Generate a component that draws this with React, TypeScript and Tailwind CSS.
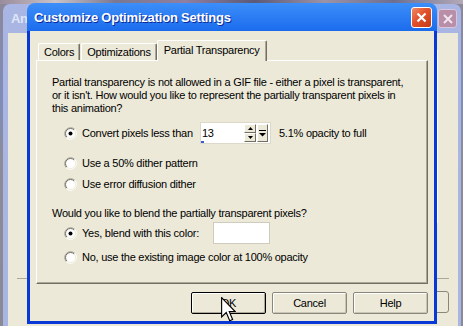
import React from 'react';

function Radio({ checked }: { checked?: boolean }) {
  return (
    <svg width="13" height="13" viewBox="0 0 13 13" className="shrink-0">
      <circle cx="6.5" cy="6.5" r="5.5" fill="#fff" />
      <path d="M2.26 10.74 A6 6 0 0 1 10.74 2.26" fill="none" stroke="#aca899" />
      <path d="M10.74 2.26 A6 6 0 0 1 2.26 10.74" fill="none" stroke="#fff" />
      <path d="M2.96 10.04 A5 5 0 0 1 10.04 2.96" fill="none" stroke="#716f64" />
      <path d="M10.04 2.96 A5 5 0 0 1 2.96 10.04" fill="none" stroke="#ece9d8" />
      {checked && <circle cx="6.5" cy="6.5" r="2" fill="#000" />}
    </svg>
  );
}

function RadioRow({ label, checked, children }: { label?: string; checked?: boolean; children?: React.ReactNode }) {
  return (
    <div className="flex items-center pl-[12px]">
      <Radio checked={checked} />
      <div className="ml-[5px] flex items-center">
        {label && <span className="whitespace-nowrap">{label}</span>}
        {children}
      </div>
    </div>
  );
}

function Btn({ label, focused }: { label: string; focused?: boolean }) {
  return (
    <div
      className={
        focused
          ? 'flex h-[22px] w-[75px] items-center justify-center rounded-[2px] border border-black bg-[#ece9d8] shadow-[inset_1px_1px_0_#fff,inset_-1px_-1px_0_#aca899]'
          : 'flex h-[22px] w-[75px] items-center justify-center rounded-[2px] border border-[#8a877a] bg-[#ece9d8] shadow-[inset_1px_1px_0_#fff,inset_-1px_-1px_0_#c8c5b7]'
      }
    >
      {label}
    </div>
  );
}

function Tab({ label, active }: { label: string; active?: boolean }) {
  return active ? (
    <div className="relative z-10 -mb-[1px] flex h-[21px] items-start rounded-t-[2px] border-l border-t border-r border-l-white border-t-white border-r-[#716f64] bg-[#ece9d8] px-[6px] pt-[3px] shadow-[inset_-1px_0_0_#aca899]">
      {label}
    </div>
  ) : (
    <div className="flex h-[17px] items-start rounded-t-[2px] border-l border-t border-r border-l-white border-t-white border-r-[#716f64] px-[5px] pt-[2px] shadow-[inset_-1px_0_0_#aca899]">
      {label}
    </div>
  );
}

function Spinner() {
  return (
    <div className="relative flex h-[22px] w-[71px] items-center border border-[#dcd9cb] bg-white pl-[1px] pr-[2px]">
      <span className="flex-1">13</span>
      <div className="flex h-[18px] w-[12px] flex-col">
        <div className="flex flex-1 items-center justify-center border border-l-white border-t-white border-r-[#716f64] border-b-[#716f64] bg-[#ece9d8]">
          <svg width="5" height="3" viewBox="0 0 5 3"><path d="M2.5 0 L5 3 L0 3 Z" fill="#000" /></svg>
        </div>
        <div className="flex flex-1 items-center justify-center border border-l-white border-t-white border-r-[#716f64] border-b-[#716f64] bg-[#ece9d8]">
          <svg width="5" height="3" viewBox="0 0 5 3"><path d="M0 0 L5 0 L2.5 3 Z" fill="#000" /></svg>
        </div>
      </div>
      <div className="ml-[1px] flex h-[18px] w-[11px] items-center justify-center border border-l-white border-t-white border-r-[#716f64] border-b-[#716f64] bg-[#ece9d8]">
        <svg width="7" height="7" viewBox="0 0 7 7">
          <rect x="0" y="0" width="7" height="1" fill="#000" />
          <path d="M0 3 L7 3 L3.5 6.5 Z" fill="#000" />
        </svg>
      </div>
      <span className="absolute bottom-0 left-0 h-[2px] w-[3px] bg-[#3b5fd0]" />
    </div>
  );
}

export default function App() {
  return (
    <div className="relative h-[326px] w-[463px] overflow-hidden bg-[linear-gradient(180deg,#8d8799_0%,#7f8db8_30%,#8c8c96_50%,#8a8a94_100%)] font-['Liberation_Sans',Arial,sans-serif] text-[11px] leading-[13px] tracking-[-0.25px] text-black">
      {/* desktop strip on top */}
      <div className="h-[4px] w-full bg-[linear-gradient(90deg,#9a8c9c,#c9c2c8_12%,#7a7892_25%,#8f7fa0_40%,#5b5a78_55%,#9c93a7_70%,#6d6f92_85%,#b3a9b8)]" />

      {/* window behind */}
      <div className="absolute left-[3px] top-[4px] flex h-[340px] w-[458px] flex-col rounded-t-[7px] bg-[#a9b6e4]">
        <div className="flex h-[29px] items-center pl-[8px] pr-[4px]">
          <span className="w-[16px] overflow-hidden whitespace-nowrap text-[13px] font-bold tracking-[-0.3px] text-[#dfe5f7]">An</span>
          <div className="ml-auto flex h-[19px] w-[19px] items-center justify-center rounded-[3px] border border-[#d7c6dc] bg-[#b98ea9]">
            <svg width="10" height="10" viewBox="0 0 10 10">
              <path d="M1 1 L9 9 M9 1 L1 9" stroke="#f1e6ee" strokeWidth="2" />
            </svg>
          </div>
        </div>
        <div className="flex flex-1 flex-col border-l-[5px] border-r-[3px] border-[#a9b6e4] bg-[#ece9d8]">
          <div className="ml-[429px] mt-[17px] h-[173px] w-[1px] bg-white" />
          <div className="ml-[9px] mt-[55px] h-[1px] w-[432px] bg-[#aca899]" />
          <div className="ml-[372px] mt-[12px] h-[22px] w-[69px] rounded-[3px] border border-[#8a877a]" />
        </div>
      </div>

      {/* dialog */}
      <div className="absolute left-[27px] top-[3px] flex h-[321px] w-[410px] flex-col overflow-hidden rounded-t-[8px] bg-[linear-gradient(180deg,#3c8ef9_0%,#0f5fe9_12%,#0558e6_55%,#0a55dd_85%,#0544cb_100%)]">
        <div className="flex h-[28px] items-center pl-[7px] pr-[5px]">
          <span className="whitespace-nowrap text-[13px] font-bold tracking-[-0.2px] text-white [text-shadow:1px_1px_0_#0c2a9a]">
            Customize Optimization Settings
          </span>
          <div className="ml-auto flex h-[21px] w-[21px] items-center justify-center rounded-[3px] border border-white bg-[linear-gradient(135deg,#f08a64,#e2512c_45%,#c23a17)]">
            <svg width="11" height="11" viewBox="0 0 11 11">
              <path d="M1.5 1.5 L9.5 9.5 M9.5 1.5 L1.5 9.5" stroke="#fff" strokeWidth="2.2" />
            </svg>
          </div>
        </div>

        <div className="flex flex-1 flex-col border-x-[3px] border-b-[3px] border-[#0a38d6] bg-[#ece9d8]">
          {/* tabs */}
          <div className="mt-[9px] flex h-[20px] items-end pl-[8px]">
            <Tab label="Colors" />
            <div className="ml-[1px]">
              <Tab label="Optimizations" />
            </div>
            <Tab label="Partial Transparency" active />
          </div>

          {/* panel */}
          <div className="mx-[6px] flex h-[224px] flex-col border border-l-white border-t-white border-r-[#716f64] border-b-[#716f64] pl-[15px] pt-[15px] shadow-[inset_-1px_-1px_0_#aca899]">
            <p className="whitespace-nowrap">
              Partial transparency is not allowed in a GIF file - either a pixel is transparent,
              <br />
              or it isn't. How would you like to represent the partially transparent pixels in
              <br />
              this animation?
            </p>

            <div className="mt-[7px]">
              <RadioRow checked>
                <span className="w-[118px] whitespace-nowrap">Convert pixels less than</span>
                <Spinner />
                <span className="ml-[8px] whitespace-nowrap">5.1% opacity to full</span>
              </RadioRow>
            </div>
            <div className="mt-[13px]">
              <RadioRow label="Use a 50% dither pattern" />
            </div>
            <div className="mt-[8px]">
              <RadioRow label="Use error diffusion dither" />
            </div>

            <p className="mt-[16px] whitespace-nowrap">Would you like to blend the partially transparent pixels?</p>

            <div className="mt-[2px]">
              <RadioRow checked>
                <span className="w-[131px] whitespace-nowrap">Yes, blend with this color:</span>
                <div className="h-[22px] w-[57px] border border-[#cfccbe] bg-white" />
              </RadioRow>
            </div>
            <div className="mt-[7px]">
              <RadioRow label="No, use the existing image color at 100% opacity" />
            </div>
          </div>

          {/* buttons */}
          <div className="mt-[8px] flex justify-end gap-[6px] pr-[6px]">
            <div className="relative">
              <Btn label="OK" focused />
              <svg
                className="absolute left-[30px] top-[5px]"
                width="15"
                height="25"
                viewBox="0 0 12 20"
              >
                <path
                  d="M0.5 0.5 L0.5 16 L4.2 12.4 L7 19 L9.3 18 L6.6 11.6 L11.3 11.6 Z"
                  fill="#fff"
                  stroke="#000"
                  strokeWidth="0.9"
                  strokeLinejoin="miter"
                />
              </svg>
            </div>
            <Btn label="Cancel" />
            <Btn label="Help" />
          </div>
        </div>
      </div>
    </div>
  );
}
